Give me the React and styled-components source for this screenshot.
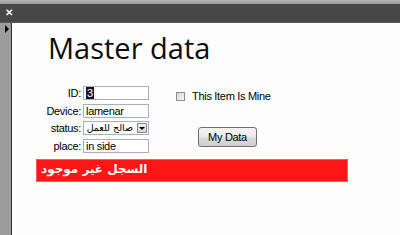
import styled, { createGlobalStyle } from "styled-components";

const GlobalStyle = createGlobalStyle`
  html, body {
    margin: 0;
    padding: 0;
    overflow: hidden;
    background: #fdfdfd;
  }
`;

const Window = styled.div`
  width: 400px;
  height: 235px;
  display: flex;
  flex-direction: column;
  font-family: "Liberation Sans", Arial, sans-serif;
  color: #000;
`;

const TopBand = styled.div`
  height: 4px;
  background: linear-gradient(#b4b4b4, #9a9a9a);
`;

const TitleBar = styled.div`
  height: 18px;
  background: #474747;
  display: flex;
  align-items: center;
  padding-left: 5px;
  border-bottom: 1px solid #5a5a5a;
`;

const Close = styled.span`
  color: #f4f4f4;
  font-size: 10px;
  font-weight: bold;
  line-height: 1;
`;

const Main = styled.div`
  flex: 1;
  display: flex;
`;

const Rail = styled.div`
  width: 11px;
  background: #9c9c9c;
  border-right: 1px solid #2c2c2c;
  padding-top: 2px;
  box-sizing: content-box;
`;

const Arrow = styled.div`
  width: 0;
  height: 0;
  margin-left: 5px;
  border-left: 4px solid #000;
  border-top: 4px solid transparent;
  border-bottom: 4px solid transparent;
`;

const Content = styled.div`
  flex: 1;
  background: #fdfdfd;
  padding-left: 24px;
`;

const Title = styled.h1`
  margin: 8px 0 0 12px;
  font-family: "Open Sans", "Noto Sans", sans-serif;
  font-weight: 400;
  font-size: 29px;
  line-height: 34px;
  color: #0d0d0d;
`;

const FormRow = styled.div`
  display: flex;
  margin-top: 21px;
`;

const Fields = styled.div`
  display: grid;
  grid-template-columns: 45px 66px;
  grid-auto-rows: 14px;
  column-gap: 2px;
  row-gap: 3.5px;
  align-items: center;
`;

const Label = styled.label`
  text-align: right;
  font-size: 11px;
  letter-spacing: -0.3px;
  line-height: 14px;
  white-space: nowrap;
`;

const Box = styled.div`
  height: 14px;
  box-sizing: border-box;
  border: 1px solid #a9b0b8;
  background: #fff;
  font-size: 11px;
  letter-spacing: -0.3px;
  line-height: 12px;
  padding: 0 2px;
  white-space: nowrap;
  overflow: hidden;
`;

const Highlight = styled.span`
  background: #12123c;
  color: #fff;
  padding: 0 1px;
`;

const SelectBox = styled.div`
  height: 14px;
  box-sizing: border-box;
  border: 1px solid #a9b0b8;
  background: #fff;
  display: flex;
  align-items: stretch;
`;

const SelectText = styled.span`
  flex: 1;
  direction: rtl;
  text-align: right;
  font-family: "DejaVu Sans", sans-serif;
  font-size: 9.5px;
  line-height: 12px;
  padding-right: 3px;
  white-space: nowrap;
`;

const DropButton = styled.span`
  width: 10px;
  margin: 1px;
  box-sizing: border-box;
  border: 1px solid #8a8a8a;
  background: linear-gradient(#f0f0f0, #d4d4d4);
  display: flex;
  align-items: center;
  justify-content: center;

  &::after {
    content: "";
    border-top: 3px solid #000;
    border-left: 3px solid transparent;
    border-right: 3px solid transparent;
  }
`;

const Side = styled.div`
  margin-left: 27px;
  display: flex;
  flex-direction: column;
  align-items: flex-start;
`;

const CheckRow = styled.label`
  margin-top: 5px;
  display: flex;
  align-items: center;
  gap: 7px;
  font-size: 11px;
  letter-spacing: -0.3px;
  line-height: 10px;
`;

const Check = styled.span`
  width: 9px;
  height: 9px;
  box-sizing: border-box;
  border: 1px solid #8f8f8f;
  background: linear-gradient(135deg, #d8d8d8, #f6f6f6);
`;

const Button = styled.button`
  margin: 26px 0 0 22px;
  width: 59px;
  height: 20px;
  box-sizing: border-box;
  border: 1px solid #707070;
  border-radius: 3px;
  background: linear-gradient(#f3f3f3 0%, #ebebeb 50%, #dddddd 51%, #cfcfcf 100%);
  font-family: "Liberation Sans", Arial, sans-serif;
  font-size: 11px;
  letter-spacing: -0.3px;
  color: #000;
  padding: 0;
`;

const Alert = styled.div`
  margin-top: 6.5px;
  width: 312px;
  height: 23px;
  box-sizing: border-box;
  background: #ff1616;
  border: 1px solid #ff5a5a;
  color: #fff;
  font-family: "DejaVu Sans", sans-serif;
  font-weight: bold;
  font-size: 12px;
  line-height: 14px;
  padding: 2px 4px;
`;

export default function App() {
  return (
    <>
      <GlobalStyle />
      <Window>
        <TopBand />
        <TitleBar>
          <Close>✕</Close>
        </TitleBar>
        <Main>
          <Rail>
            <Arrow />
          </Rail>
          <Content>
            <Title>Master data</Title>
            <FormRow>
              <Fields>
                <Label>ID:</Label>
                <Box>
                  <Highlight>3</Highlight>
                </Box>
                <Label>Device:</Label>
                <Box>lamenar</Box>
                <Label>status:</Label>
                <SelectBox>
                  <SelectText>صالح للعمل</SelectText>
                  <DropButton />
                </SelectBox>
                <Label>place:</Label>
                <Box>in side</Box>
              </Fields>
              <Side>
                <CheckRow>
                  <Check />
                  This Item Is Mine
                </CheckRow>
                <Button>My Data</Button>
              </Side>
            </FormRow>
            <Alert>السجل غير موجود</Alert>
          </Content>
        </Main>
      </Window>
    </>
  );
}
